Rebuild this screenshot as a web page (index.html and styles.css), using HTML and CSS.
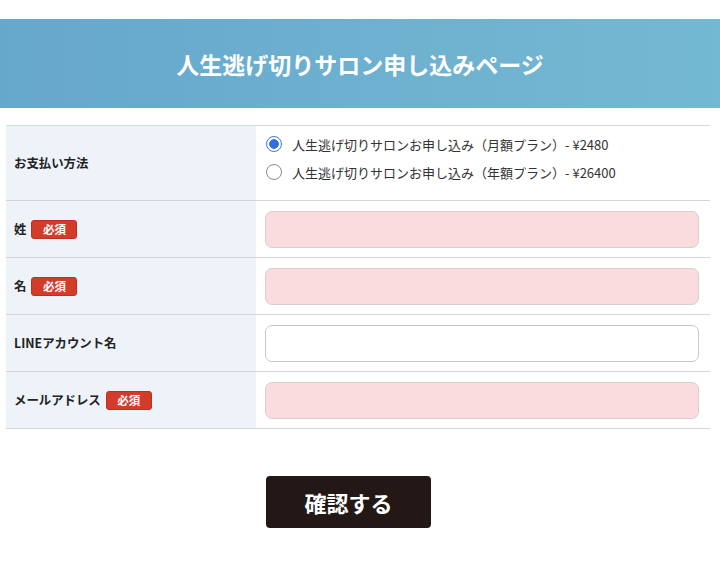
FILE: index.html
```html
<!DOCTYPE html>
<html lang="ja">
<head>
<meta charset="utf-8">
<title>人生逃げ切りサロン申し込みページ</title>
<link rel="stylesheet" href="styles.css">
</head>
<body>
<header class="hero">
  <h1 class="hero-title">人生逃げ切りサロン申し込みページ</h1>
</header>
<form class="form">
  <div class="form-table">
    <div class="row row-tall">
      <div class="label-cell"><span class="label">お支払い方法</span></div>
      <div class="field-cell field-radios">
        <label class="radio"><span class="radio-dot checked"></span><span class="radio-text">人生逃げ切りサロンお申し込み（月額プラン）- ¥2480</span></label>
        <label class="radio"><span class="radio-dot"></span><span class="radio-text">人生逃げ切りサロンお申し込み（年額プラン）- ¥26400</span></label>
      </div>
    </div>
    <div class="row">
      <div class="label-cell"><span class="label">姓</span><span class="badge">必須</span></div>
      <div class="field-cell"><div class="input required"></div></div>
    </div>
    <div class="row">
      <div class="label-cell"><span class="label">名</span><span class="badge">必須</span></div>
      <div class="field-cell"><div class="input required"></div></div>
    </div>
    <div class="row">
      <div class="label-cell"><span class="label">LINEアカウント名</span></div>
      <div class="field-cell"><div class="input"></div></div>
    </div>
    <div class="row">
      <div class="label-cell"><span class="label">メールアドレス</span><span class="badge">必須</span></div>
      <div class="field-cell"><div class="input required"></div></div>
    </div>
  </div>
  <div class="actions">
    <button type="button" class="submit">確認する</button>
  </div>
</form>
</body>
</html>
```
FILE: styles.css
```css
* { box-sizing: border-box; }
body {
  margin: 0;
  background: #fff;
  font-family: "Noto Sans CJK JP", "Noto Sans", sans-serif;
  color: #222;
}
.hero {
  margin-top: 19px;
  height: 89px;
  background: linear-gradient(90deg, #66a7cc 0%, #74b9d3 100%);
  display: flex;
  align-items: center;
  justify-content: center;
}
.hero-title {
  margin: 0;
  color: #fff;
  font-size: 23px;
  font-weight: 700;
  letter-spacing: 0;
}
.form {
  padding-top: 17px;
}
.form-table {
  margin: 0 10px 0 6px;
  border-top: 1px solid #d6d9de;
}
.row {
  display: flex;
  height: 57px;
  border-bottom: 1px solid #d3d7dd;
}
.row-tall { height: 75px; }
.label-cell {
  width: 250px;
  background: #eef3fa;
  display: flex;
  align-items: center;
  padding-left: 8px;
  gap: 5px;
}
.label {
  font-size: 12.4px;
  font-weight: 700;
  color: #222;
}
.badge {
  display: inline-flex;
  align-items: center;
  justify-content: center;
  width: 46px;
  height: 19px;
  background: #d33c2b;
  border: 1px solid #b8321f;
  border-radius: 3px;
  color: #fff;
  font-size: 11.5px;
  font-weight: 700;
}
.field-cell {
  flex: 1;
  display: flex;
  align-items: center;
  padding: 0 11px 0 9px;
}
.field-radios {
  flex-direction: column;
  align-items: flex-start;
  justify-content: flex-start;
  padding-top: 10px;
  gap: 12px;
  padding-left: 10px;
}
.radio {
  display: flex;
  align-items: center;
  gap: 10px;
  height: 16px;
}
.radio-dot {
  width: 16px;
  height: 16px;
  border-radius: 50%;
  border: 1px solid #8a8a8a;
  background: #fff;
}
.radio-dot.checked {
  border: 1px solid #3a78e0;
  background: radial-gradient(circle, #2f6fe4 0 4.5px, #fff 5px);
}
.radio-text {
  font-size: 13px;
  color: #333;
}
.input {
  width: 100%;
  height: 37px;
  border: 1px solid #c8c8c8;
  border-radius: 7px;
  background: #fff;
}
.input.required {
  background: #fadcdf;
  border-color: #d9cfd0;
}
.actions {
  padding: 47px 0 0 266px;
}
.submit {
  width: 165px;
  height: 52px;
  background: #231815;
  border: 0;
  border-radius: 4px;
  color: #fff;
  font-family: "Noto Sans CJK JP", sans-serif;
  font-size: 22px;
  font-weight: 700;
}
```
